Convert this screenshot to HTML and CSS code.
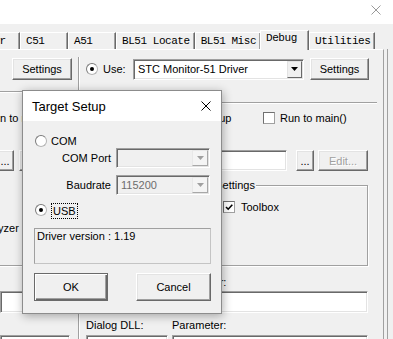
FILE: index.html
```html
<!DOCTYPE html>
<html>
<head>
<meta charset="utf-8">
<title>Target Setup</title>
<link rel="stylesheet" href="styles.css">
</head>
<body>
<div class="titlebar">
  <svg class="x-main" viewBox="0 0 10 10"><path d="M0.5 0.5L9.5 9.5M9.5 0.5L0.5 9.5"/></svg>
</div>
<div class="tabs">
  <div class="tab first">User</div>
  <div class="tab">C51</div>
  <div class="tab">A51</div>
  <div class="tab wide">BL51 Locate</div>
  <div class="tab wide">BL51 Misc</div>
  <div class="tab active">Debug</div>
  <div class="tab">Utilities</div>
</div>
<div class="frame">
  <div class="panel">
    <div class="col left">
      <div class="btn set-l">Settings</div>
      <div class="etch l-line"></div>
      <div class="cut-text run">Run to main()</div>
      <div class="row l-row4"><div class="btn dots l-dots">...</div><div class="btn edit l-edit">Edit...</div></div>
      <div class="cut-text analyzer">Analyzer</div>
      <div class="etch l-group"></div>
      <div class="field l-f1"></div>
      <div class="field l-f2"></div>
    </div>
    <div class="vsep"></div>
    <div class="col right">
      <div class="row r1">
        <span class="radio on"></span>
        <span class="use">Use:</span>
        <div class="select">
          <span class="sel-text">STC Monitor-51 Driver</span>
          <span class="drop"><svg viewBox="0 0 7 4"><path d="M0 0H7L3.5 4Z"/></svg></span>
        </div>
        <div class="btn set-r">Settings</div>
      </div>
      <div class="etch r-line"></div>
      <div class="row r3">
        <div class="opt w177"><span class="check"></span><span class="opt-t1">Load Application at Startup</span></div>
        <div class="opt"><span class="check"></span><span class="opt-t2">Run to main()</span></div>
      </div>
      <div class="row r4">
        <div class="field init"></div>
        <div class="btn dots">...</div>
        <div class="btn edit">Edit...</div>
      </div>
      <div class="group">
        <div class="legend">Restore Debug Session Settings</div>
        <div class="row grow">
          <div class="opt w128"><span class="check"><svg viewBox="0 0 10 10"><path d="M2 5L4.2 7.2L8.3 2.8"/></svg></span><span class="opt-t1">Breakpoints</span></div>
          <div class="opt"><span class="check"><svg viewBox="0 0 10 10"><path d="M2 5L4.2 7.2L8.3 2.8"/></svg></span><span class="opt-t3">Toolbox</span></div>
        </div>
      </div>
      <div class="dll-labels"><span>Driver DLL:</span><span>Parameter:</span></div>
      <div class="dll-fields"><div class="field"></div><div class="field"></div></div>
      <div class="dll-labels second"><span>Dialog DLL:</span><span>Parameter:</span></div>
      <div class="dll-fields second"><div class="field"></div><div class="field"></div></div>
    </div>
  </div>
</div>

<div class="dialog">
  <div class="dlg-title">
    <span>Target Setup</span>
    <svg class="x-dlg" viewBox="0 0 10 10"><path d="M0.5 0.5L9.5 9.5M9.5 0.5L0.5 9.5"/></svg>
  </div>
  <div class="dlg-body">
    <div class="drow com"><span class="radio"></span><span class="lbl">COM</span></div>
    <div class="drow port">
      <span class="plabel">COM Port</span>
      <div class="combo"><span class="ctext"></span><span class="cdrop"><svg viewBox="0 0 7 4"><path d="M0 0H7L3.5 4Z"/></svg></span></div>
    </div>
    <div class="drow baud">
      <span class="plabel">Baudrate</span>
      <div class="combo"><span class="ctext">115200</span><span class="cdrop"><svg viewBox="0 0 7 4"><path d="M0 0H7L3.5 4Z"/></svg></span></div>
    </div>
    <div class="drow usb"><span class="radio on"></span><span class="focus">USB</span></div>
    <div class="driver">Driver version : 1.19</div>
    <div class="drow btns">
      <div class="btn default ok">OK</div>
      <div class="btn cancel">Cancel</div>
    </div>
  </div>
</div>
</body>
</html>
```

FILE: styles.css
```css
* { box-sizing: border-box; }
html, body { margin: 0; padding: 0; }
body {
  width: 393px;
  height: 339px;
  overflow: hidden;
  position: relative;
  background: #f0f0f0;
  font-family: "Liberation Sans", Arial, sans-serif;
  font-size: 11px;
  color: #000;
}

/* window title strip */
.titlebar {
  height: 24px;
  background: #fff;
  display: flex;
  justify-content: flex-end;
  padding: 5px 12px 0 0;
}
.x-main { width: 10px; height: 10px; display: block; }
.x-main path { stroke: #9a9a9a; stroke-width: 1; fill: none; }

/* tabs */
.tabs {
  height: 25px;
  display: flex;
  align-items: flex-end;
  position: relative;
  z-index: 2;
}
.tab {
  height: 17px;
  min-width: 48px;
  padding: 0 4px 0 5px;
  border-top: 1px solid #fff;
  border-left: 1px solid #fff;
  border-right: 1px solid #696969;
  box-shadow: inset -1px 0 #a0a0a0;
  font-family: "Liberation Mono", "DejaVu Sans Mono", monospace;
  font-size: 11px;
  letter-spacing: -0.45px;
  line-height: 16px;
  white-space: nowrap;
  background: #f0f0f0;
}
.tab.first { margin-left: -28px; width: 48px; padding-left: 8px; }
.tab.active {
  height: 20px;
  margin-bottom: -1px;
  margin-left: -1px;
  min-width: 49px;
  line-height: 15px;
  position: relative;
  z-index: 3;
}

/* main panel */
.frame {
  width: 388px;
  padding-right: 3px;
  border-right: 1px solid #a0a0a0;
  height: 290px;
}
.panel {
  width: 384px;
  height: 290px;
  border-top: 1px solid #fff;
  border-right: 1px solid #a0a0a0;
  display: flex;
  overflow: hidden;
}
.col.left { width: 78px; flex: none; overflow: hidden; }
.vsep {
  width: 2px;
  flex: none;
  margin-top: 7px;
  height: 300px;
  border-left: 1px solid #a0a0a0;
  border-right: 1px solid #fff;
}
.col.right { flex: 1; padding-left: 6px; }

.row { display: flex; align-items: center; }

/* generic controls */
.btn {
  display: flex;
  align-items: center;
  justify-content: center;
  background: #f0f0f0;
  border: 1px solid;
  border-color: #fff #696969 #696969 #fff;
  box-shadow: inset -1px -1px #a0a0a0, inset 1px 1px #e3e3e3;
  white-space: nowrap;
  flex: none;
}
.btn.default {
  border-color: #6a6a6a;
  box-shadow: inset 1px 1px #fff, inset -1px -1px #696969, inset -2px -2px #a0a0a0;
}
.edit { color: #a0a0a0; text-shadow: 1px 1px #fff; }

.field {
  background: #fff;
  border: 1px solid;
  border-color: #a0a0a0 #fff #fff #a0a0a0;
  box-shadow: inset 1px 1px #696969, inset -1px -1px #e3e3e3;
}
.etch {
  height: 2px;
  border-top: 1px solid #a0a0a0;
  border-bottom: 1px solid #fff;
}
.radio {
  width: 12px;
  height: 12px;
  flex: none;
  border-radius: 50%;
  background: #fff;
  border: 1px solid #b4b4b4;
  border-top-color: #7a7a7a;
  border-left-color: #7a7a7a;
  position: relative;
}
.radio.on::after {
  content: "";
  position: absolute;
  left: 3px;
  top: 3px;
  width: 4px;
  height: 4px;
  border-radius: 50%;
  background: #000;
}
.check {
  width: 12px;
  height: 12px;
  flex: none;
  background: #fff;
  border: 1px solid #a0a0a0;
  border-top-color: #707070;
  border-left-color: #707070;
}
.check svg { display: block; width: 10px; height: 10px; }
.check path { stroke: #000; stroke-width: 1.6; fill: none; }

/* left column pieces */
.set-l { margin: 8px 0 0 12px; width: 60px; height: 22px; }
.l-line { margin-top: 11px; }
.cut-text { white-space: nowrap; }
.run { margin-top: 19px; margin-left: -14px; line-height: 12px; height: 12px; }
.l-row4 { margin-top: 26px; height: 21px; }
.l-dots { margin-left: -4px; width: 18px; height: 21px; }
.l-edit { margin-left: 5px; width: 50px; height: 21px; }
.analyzer { margin-top: 51px; margin-left: -24px; line-height: 13px; height: 13px; }
.l-group { margin-top: 30px; }
.l-f1 { margin-top: 24px; width: 70px; height: 22px; }
.l-f2 { margin-top: 22px; width: 70px; height: 22px; }

/* right column pieces */
.r1 { margin-top: 8px; height: 22px; }
.use { margin-left: 5px; width: 30px; }
.select {
  width: 171px;
  height: 21px;
  display: flex;
  align-items: center;
  background: #fff;
  border: 1px solid;
  border-color: #a0a0a0 #fff #fff #a0a0a0;
  box-shadow: inset 1px 1px #696969, inset -1px -1px #e3e3e3;
  padding: 1px;
}
.sel-text { padding-left: 3px; white-space: nowrap; }
.drop {
  margin-left: auto;
  width: 15px;
  height: 17px;
  display: flex;
  align-items: center;
  justify-content: center;
  background: #f0f0f0;
  border: 1px solid;
  border-color: #e3e3e3 #696969 #696969 #e3e3e3;
}
.drop svg { width: 7px; height: 4px; display: block; }
.drop path { fill: #000; }
.set-r { margin-left: 6px; width: 59px; height: 22px; }
.r-line { margin-top: 22px; margin-right: 6px; }
.r3 { margin-top: 8px; height: 12px; }
.opt { display: flex; align-items: center; white-space: nowrap; }
.w177 { width: 177px; }
.w128 { width: 128px; }
.opt-t1 { margin-left: 2px; }
.opt-t2 { margin-left: 5px; }
.opt-t3 { margin-left: 6px; }
.r4 { margin-top: 26px; height: 21px; }
.init { width: 201px; height: 21px; }
.r4 .dots { margin-left: 9px; width: 18px; height: 21px; }
.r4 .edit { margin-left: 4px; width: 50px; height: 21px; }
.group {
  margin-top: 14px;
  margin-left: 1px;
  width: 281px;
  height: 81px;
  border: 1px solid #a0a0a0;
  box-shadow: inset 1px 1px #fff, 1px 1px #fff;
  padding-left: 7px;
}
.legend {
  width: fit-content;
  margin-top: -7px;
  padding: 0 1px;
  line-height: 13px;
  height: 13px;
  background: #f0f0f0;
}
.grow { margin-top: 9px; height: 12px; }
.dll-labels {
  margin-top: 10px;
  display: grid;
  grid-template-columns: 82px 196px;
  column-gap: 4px;
  line-height: 13px;
  height: 13px;
}
.dll-labels.second { margin-top: 6px; }
.dll-fields {
  margin-top: 2px;
  display: grid;
  grid-template-columns: 82px 196px;
  column-gap: 4px;
  height: 22px;
}
.dll-fields.second { margin-top: 3px; }

/* Target Setup dialog (floats over the options page) */
.dialog {
  position: absolute;
  left: 22px;
  top: 90px;
  width: 200px;
  height: 224px;
  border: 1px solid #8c8c8c;
  background: #f0f0f0;
  box-shadow: 1px 2px 9px rgba(0, 0, 0, 0.32);
  z-index: 10;
}
.dlg-title {
  height: 30px;
  background: #fff;
  display: flex;
  align-items: center;
  justify-content: space-between;
  padding: 0 10px 0 9px;
  font-size: 13px;
}
.x-dlg { width: 10px; height: 10px; display: block; }
.x-dlg path { stroke: #000; stroke-width: 1; fill: none; }
.dlg-body { padding: 14px 0 0 12px; }
.drow { display: flex; align-items: center; }
.com { height: 12px; }
.lbl { margin-left: 4px; }
.port { margin-top: 1px; height: 20px; }
.baud { margin-top: 7px; height: 20px; }
.plabel { width: 76px; text-align: right; margin-right: 5px; white-space: nowrap; }
.combo {
  width: 94px;
  height: 20px;
  display: flex;
  align-items: center;
  background: #f0f0f0;
  border: 1px solid;
  border-color: #a0a0a0 #fff #fff #a0a0a0;
  box-shadow: inset 1px 1px #696969, inset -1px -1px #e3e3e3;
  padding: 1px;
}
.ctext { padding-left: 3px; color: #6d6d6d; }
.cdrop {
  margin-left: auto;
  width: 16px;
  height: 16px;
  display: flex;
  align-items: center;
  justify-content: center;
  background: #f4f4f4;
  border: 1px solid;
  border-color: #e8e8e8 #a8a8a8 #a8a8a8 #e8e8e8;
}
.cdrop svg { width: 7px; height: 4px; display: block; }
.cdrop path { fill: #a0a0a0; }
.usb { margin-top: 8px; height: 16px; align-items: flex-start; }
.usb .radio { margin-top: 1px; }
.focus {
  margin-left: 4px;
  height: 16px;
  line-height: 14px;
  padding: 0 1px;
  border: 1px dotted #000;
}
.driver {
  margin-top: 9px;
  margin-left: -1px;
  width: 177px;
  height: 36px;
  border: 1px solid #c4c4c4;
  border-top-color: #a0a0a0;
  border-left-color: #a0a0a0;
  padding: 1px 2px;
  line-height: 13px;
}
.btns { margin-top: 9px; height: 28px; }
.ok { width: 74px; height: 28px; margin-left: -1px; }
.cancel { width: 75px; height: 28px; margin-left: 28px; }
```
